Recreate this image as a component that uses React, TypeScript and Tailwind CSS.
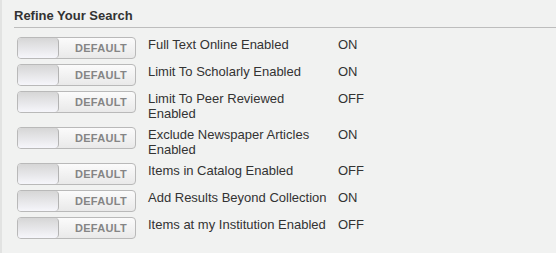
import React from 'react';

const filters = [
  { label: 'Full Text Online Enabled', value: 'ON' },
  { label: 'Limit To Scholarly Enabled', value: 'ON' },
  { label: 'Limit To Peer Reviewed Enabled', value: 'OFF' },
  { label: 'Exclude Newspaper Articles Enabled', value: 'ON' },
  { label: 'Items in Catalog Enabled', value: 'OFF' },
  { label: 'Add Results Beyond Collection', value: 'ON' },
  { label: 'Items at my Institution Enabled', value: 'OFF' },
];

function DefaultToggle() {
  return (
    <div className="flex h-[22px] w-[119px] shrink-0 overflow-hidden rounded-[4px] border border-[#b9b9b9] bg-gradient-to-b from-[#fbfbfb] to-[#e9e9e9]">
      <div className="h-full w-[41px] rounded-r-[4px] border-r border-[#b3b3b3] bg-gradient-to-b from-[#d6d6d6] to-[#f6f6fb]" />
      <div className="flex flex-1 items-center justify-end pr-[8px] text-[11px] font-bold tracking-[0.3px] text-[#858585]">
        DEFAULT
      </div>
    </div>
  );
}

export default function App() {
  return (
    <div
      className="h-[253px] w-[556px] border-l-2 border-[#e2e3e2] bg-[#f1f2f1] pl-[12px] pt-[8px] text-[#333]"
      style={{ fontFamily: '"Liberation Sans", Arial, sans-serif' }}
    >
      <h2 className="border-b border-[#bdbdbd] pb-[3px] text-[13px] font-bold leading-[16px] text-[#333]">
        Refine Your Search
      </h2>
      <div className="mt-[9px] flex flex-col gap-[5px] pl-[3px]">
        {filters.map((f) => (
          <div key={f.label} className="flex items-start">
            <DefaultToggle />
            <div className="w-[202px] pl-[12px] pr-[6px] pb-[1px] text-[13px] leading-[15px]">
              {f.label}
            </div>
            <div className="text-[13px] leading-[15px]">{f.value}</div>
          </div>
        ))}
      </div>
    </div>
  );
}
